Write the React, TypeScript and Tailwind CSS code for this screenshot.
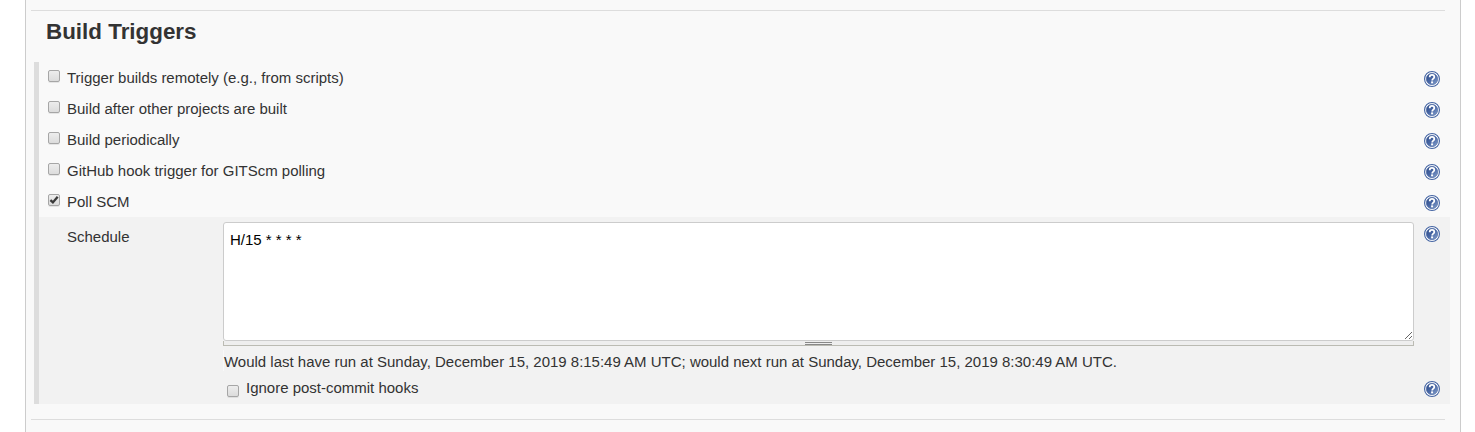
import { useState } from "react";

function HelpIcon() {
  return (
    <svg width="16" height="16" viewBox="0 0 16 16" className="block shrink-0">
      <defs>
        <linearGradient id="help" x1="0" y1="0" x2="1" y2="1">
          <stop offset="0" stopColor="#2c4a86" />
          <stop offset="0.5" stopColor="#4867a5" />
          <stop offset="1" stopColor="#8fa8d0" />
        </linearGradient>
      </defs>
      <circle cx="8" cy="8" r="7.45" fill="#fff" stroke="#4565a3" strokeWidth="1.1" />
      <circle cx="8" cy="8" r="5.7" fill="url(#help)" stroke="#3f5f9e" strokeWidth="0.6" />
      <path d="M5.7 6.2C5.7 4.6 6.6 3.9 8 3.9s2.3.8 2.3 2.1c0 1.6-2.1 1.7-2.1 3.4" fill="none" stroke="#fff" strokeWidth="1.8" />
      <rect x="7.1" y="10.4" width="2" height="1.9" fill="#fff" />
    </svg>
  );
}

function Check({ checked, onToggle, label }: { checked: boolean; onToggle: () => void; label: string }) {
  return (
    <button
      type="button"
      role="checkbox"
      aria-checked={checked}
      aria-label={label}
      onClick={onToggle}
      className="block size-3 shrink-0 rounded-[2px] border border-[#a6a6a6] bg-linear-to-b from-[#ededed] to-[#dcdcdc] shadow-[0_1px_0_rgba(0,0,0,0.08)]"
    >
      {checked && (
        <svg width="10" height="10" viewBox="0 0 10 10" className="block">
          <path d="M1.4 5.1 3.9 7.4 8.7 1.7" fill="none" stroke="#3a3a3a" strokeWidth="2.3" />
        </svg>
      )}
    </button>
  );
}

const triggers = [
  "Trigger builds remotely (e.g., from scripts)",
  "Build after other projects are built",
  "Build periodically",
  "GitHub hook trigger for GITScm polling",
  "Poll SCM",
];

export default function App() {
  const [selected, setSelected] = useState([false, false, false, false, true]);
  const [ignore, setIgnore] = useState(false);
  const [schedule, setSchedule] = useState("H/15 * * * *");

  return (
    <div className="h-[432px] overflow-hidden bg-white pr-[14px] pl-[25px] font-['Liberation_Sans',Arial,sans-serif] text-[14.99px] leading-[19px] text-[#333]">
      <main className="h-full border-x border-[#ccc] bg-[#f9f9f9] pt-[10px]">
        <hr className="mr-[15px] ml-[5px] border-[#ddd]" />
        <h2 className="h-[51px] pt-[7px] pl-5 text-[22.4px] leading-[28px] font-bold">Build Triggers</h2>
        <section className="mr-[10px] ml-2 h-[342px] border-l-5 border-[#ddd]">
          {triggers.map((label, i) => (
            <div key={label} className="flex h-[31px] items-start pr-[10px] pl-[9px]">
              <div className="pt-2">
                <Check
                  label={label}
                  checked={selected[i]}
                  onToggle={() => setSelected(selected.map((v, n) => (n === i ? !v : v)))}
                />
              </div>
              <span className="grow pt-[6px] pl-[7px]">{label}</span>
              <div className="pt-[9px]"><HelpIcon /></div>
            </div>
          ))}
          <div className="flex h-[187px] items-start bg-[#f2f2f2] pr-[10px]">
            <label htmlFor="schedule" className="w-[184px] shrink-0 pt-[10px] pl-7">Schedule</label>
            <div className="w-[1191px] shrink-0 pt-[5px]">
              <textarea
                id="schedule"
                value={schedule}
                onChange={(e) => setSchedule(e.target.value)}
                spellCheck={false}
                className="block h-[119px] w-full resize rounded-[3px] border border-[#ccc] bg-white px-[6px] pt-[7px] text-[15px] leading-[19px] text-black outline-none"
              />
              <div className="flex h-[5px] justify-center border border-t-0 border-[#bbbbb3] bg-[#eee]">
                <div className="mt-px h-[3px] w-[27px] border-y border-[#888]" />
              </div>
              <p className="mt-[4px] border-l border-[#f9f9f9] pt-[2px] whitespace-nowrap">
                Would last have run at Sunday, December 15, 2019 8:15:49 AM UTC; would next run at Sunday, December 15, 2019 8:30:49 AM UTC.
              </p>
              <div className="flex items-start pt-[7px] pl-1">
                <div className="pt-[7px]"><Check label="Ignore post-commit hooks" checked={ignore} onToggle={() => setIgnore(!ignore)} /></div>
                <span className="pl-[7px]">Ignore post-commit hooks</span>
              </div>
            </div>
            <div className="flex h-full grow flex-col items-end justify-between pt-[9px] pb-[7px]">
              <HelpIcon />
              <HelpIcon />
            </div>
          </div>
        </section>
        <hr className="mt-[15px] mr-[15px] ml-[5px] border-[#ddd]" />
      </main>
    </div>
  );
}
